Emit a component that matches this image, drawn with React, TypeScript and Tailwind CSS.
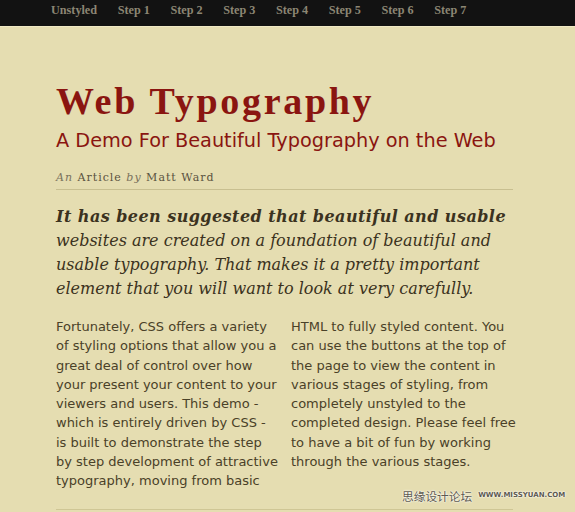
const navItems = ["Unstyled", "Step 1", "Step 2", "Step 3", "Step 4", "Step 5", "Step 6", "Step 7"];

export default function App() {
  return (
    <div className="relative min-h-[512px] w-[575px] overflow-hidden bg-[#e5ddb1]">
      <nav className="h-[27px] border-b border-[#f0e9c4] bg-[#121212]">
        <ul className="flex h-[26px] items-start gap-x-[20.6px] pt-[2px] pl-[51px] font-['Liberation_Serif',serif] text-[12.2px] leading-[16px] font-bold text-[#8c8674]">
          {navItems.map((item) => (
            <li key={item}>{item}</li>
          ))}
        </ul>
      </nav>

      <main className="ml-[56px] w-[460px] pt-[52px]">
        <h1 className="font-['Liberation_Serif',serif] text-[38px] leading-[44px] font-bold tracking-[2.7px] text-[#8a1510]">
          Web Typography
        </h1>
        <h2 className="mt-[5px] font-['DejaVu_Sans',sans-serif] text-[19.3px] leading-[26px] text-[#8a1510]">
          A Demo For Beautiful Typography on the Web
        </h2>

        <p className="mt-[15px] w-[457px] border-b border-[#c8bf90] pb-[2px] font-['DejaVu_Serif',serif] text-[11px] leading-[18px] tracking-[1px] text-[#5a5240]">
          <em className="text-[#7a725e]">An</em> Article <em className="text-[#7a725e]">by</em> Matt Ward
        </p>

        <p className="mt-[15px] font-['DejaVu_Serif',serif] text-[16px] leading-[24px] italic text-[#3b3220]">
          <strong className="tracking-[0.45px]">It has been suggested that beautiful and usable</strong> websites are created on a
          foundation of beautiful and usable typography. That makes it a pretty important element
          that you will want to look at very carefully.
        </p>

        <div className="mt-[16px] grid w-[457px] grid-cols-[222.5px_226px] gap-x-[12.5px] border-b border-[#cfc695] pb-[18px] font-['DejaVu_Sans',sans-serif] text-[13px] leading-[19.3px] text-[#4a4128]">
          <p>
            Fortunately, CSS offers a variety of styling options that allow you a great deal of control
            over how your present your content to your viewers and users. This demo - which is entirely
            driven by CSS - is built to demonstrate the step by step development of attractive
            typography, moving from basic
          </p>
          <p>
            HTML to fully styled content. You can use the buttons at the top of the page to view the
            content in various stages of styling, from completely unstyled to the completed design.
            Please feel free to have a bit of fun by working through the various stages.
          </p>
        </div>
      </main>

      <div className="absolute left-[402px] top-[490px] flex items-center gap-[6px] whitespace-nowrap text-[#5e5a50] [text-shadow:0_0_2px_#fff,0_0_2px_#fff]">
        <span className="font-['Noto_Sans_CJK_SC',sans-serif] text-[11.7px] leading-none">思缘设计论坛</span>
        <span className="font-['DejaVu_Sans',sans-serif] text-[7px] leading-none font-bold">WWW.MISSYUAN.COM</span>
      </div>
    </div>
  );
}
